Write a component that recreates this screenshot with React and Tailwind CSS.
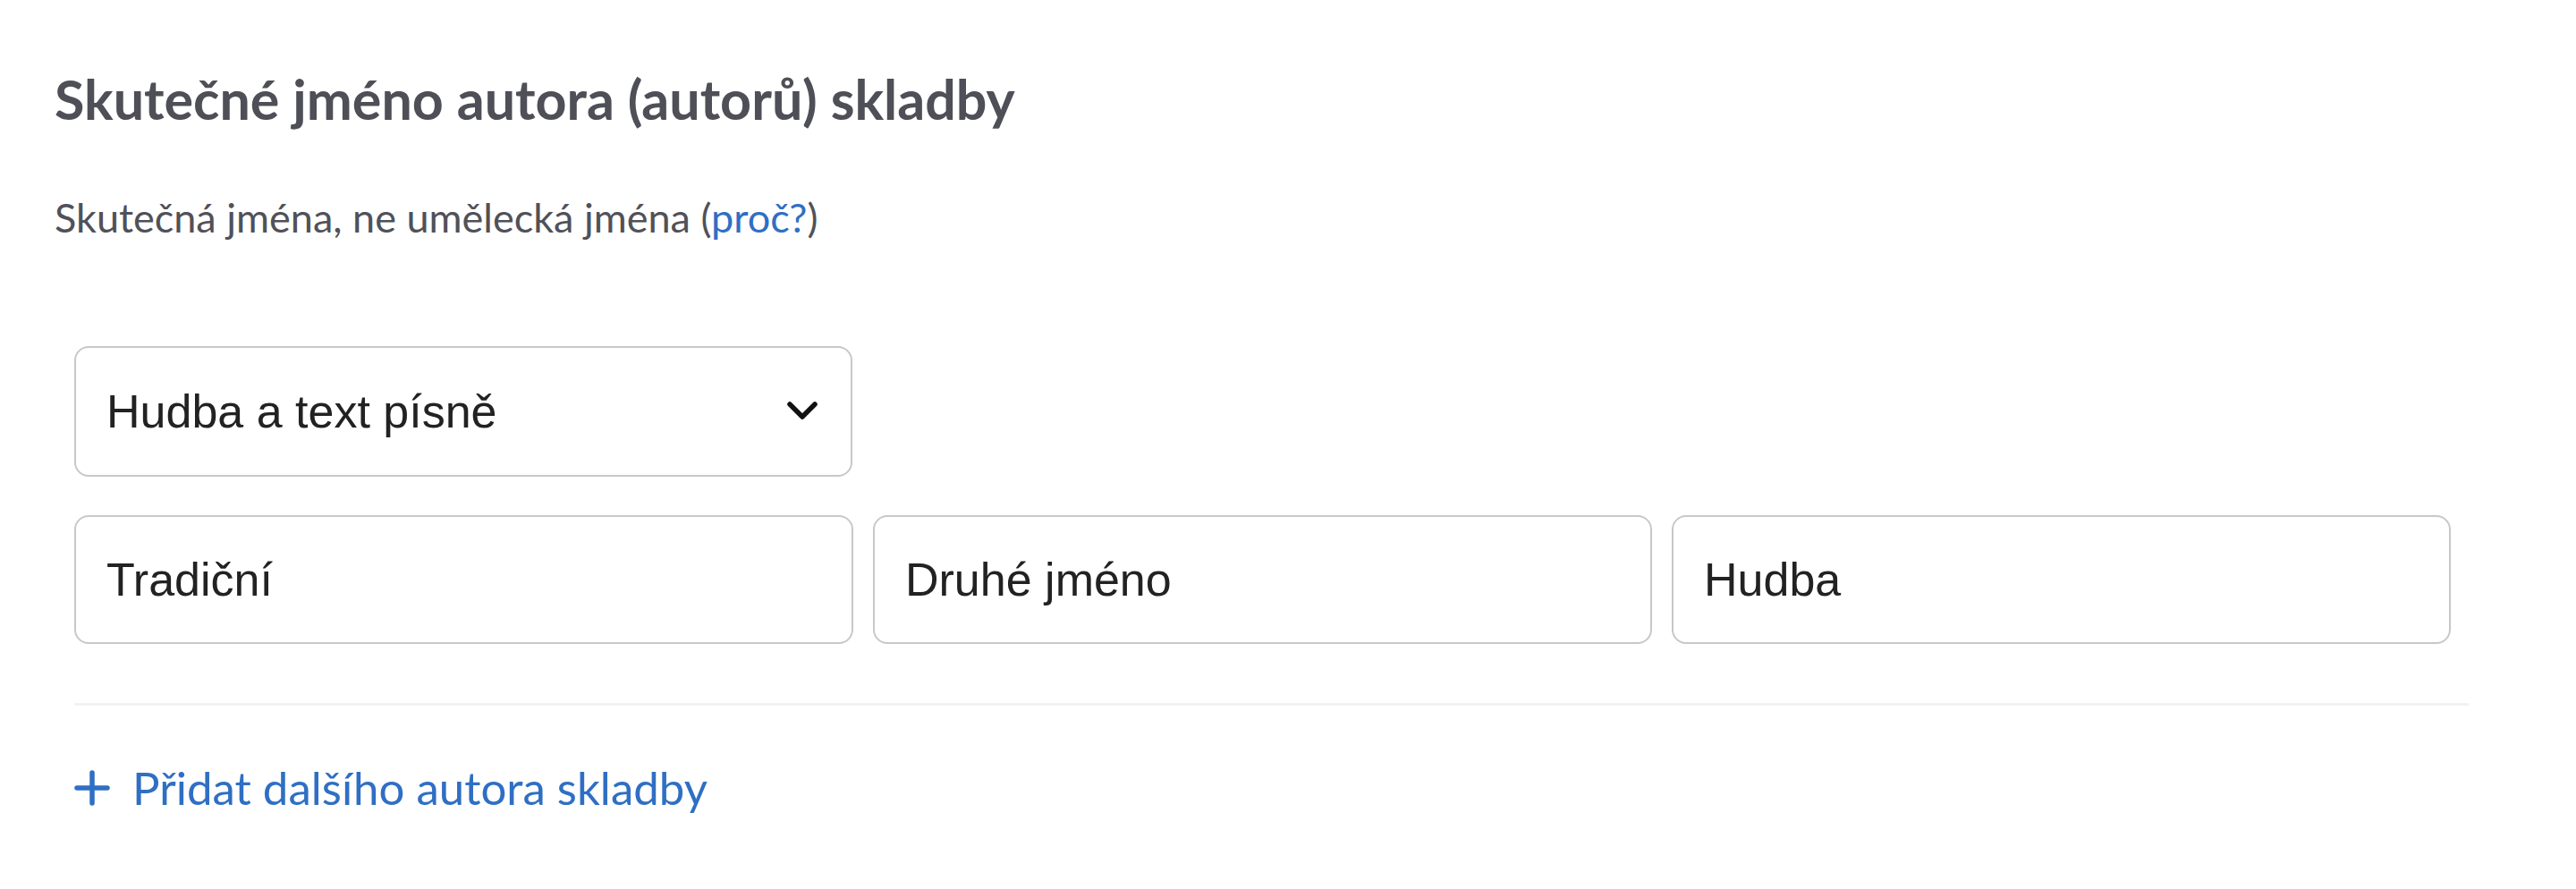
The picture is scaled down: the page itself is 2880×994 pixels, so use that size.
import { useState } from "react";

const inputClass =
  "w-full h-[144px] rounded-[16px] border-2 border-[#c8c8c8] bg-white px-[34px] text-[52px] text-[#222222] font-['Liberation_Sans',Arial,sans-serif] outline-none";

export default function App() {
  const [names, setNames] = useState({ first: "Tradiční", middle: "Druhé jméno", last: "Hudba" });

  return (
    <div className="min-h-screen bg-white pl-[61px] pt-[75px] font-['Lato','Noto_Sans',sans-serif]">
      <h2 className="text-[61px] leading-[72px] font-bold text-[#4e4f57]">Skutečné jméno autora (autorů) skladby</h2>
      <p className="mt-[69px] text-[45px] leading-[54px] text-[#505159]">
        Skutečná jména, ne umělecká jména (<a href="#" className="text-[#2f6fc3]">proč?</a>)
      </p>

      <div className="ml-[22px] mt-[117px] w-[2677px]">
        <div className="flex w-[870px] h-[146px] items-center justify-between rounded-[16px] border-2 border-[#c8c8c8] bg-white pl-[34px] pr-[36px]">
          <span className="text-[52px] text-[#222222] font-['Liberation_Sans',Arial,sans-serif]">Hudba a text písně</span>
          <svg width="36" height="24" viewBox="0 0 36 24" fill="none">
            <path d="M4 4 L18 18 L32 4" stroke="#111111" strokeWidth="5.5" strokeLinecap="round" strokeLinejoin="round" />
          </svg>
        </div>

        <div className="mt-[43px] grid w-[2657px] grid-cols-3 gap-[22px]">
          <input
            className={inputClass}
            value={names.first}
            onChange={(e) => setNames({ ...names, first: e.target.value })}
          />
          <input
            className={inputClass}
            value={names.middle}
            onChange={(e) => setNames({ ...names, middle: e.target.value })}
          />
          <input
            className={inputClass}
            value={names.last}
            onChange={(e) => setNames({ ...names, last: e.target.value })}
          />
        </div>

        <div className="mt-[66px] h-[3px] bg-[#f2f2f2]" />

        <button className="mt-[62px] flex items-center gap-[25px] text-[51px] leading-[60px] text-[#2f6fc3]">
          <svg width="40" height="40" viewBox="0 0 40 40" fill="none">
            <path d="M20 3 V37 M3 20 H37" stroke="#2f6fc3" strokeWidth="5.5" strokeLinecap="round" />
          </svg>
          Přidat dalšího autora skladby
        </button>
      </div>
    </div>
  );
}
